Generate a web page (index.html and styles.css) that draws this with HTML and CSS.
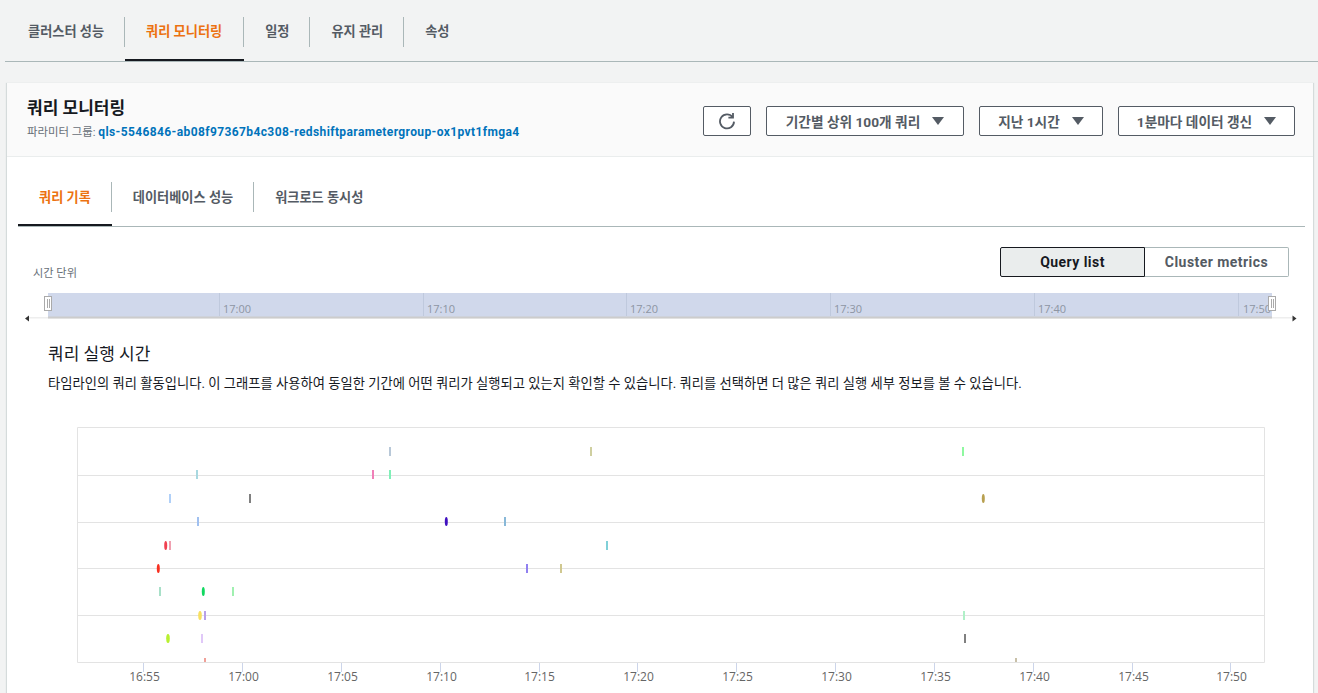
FILE: index.html
```html
<!DOCTYPE html>
<html lang="ko">

<head>
    <meta charset="UTF-8">
    <meta name="viewport" content="width=device-width, initial-scale=1.0">
    <title>쿼리 모니터링</title>
    <link rel="stylesheet" href="styles.css">
</head>

<body>
    <ul class="tabs top-tabs">
        <li class="tab"><a href="#">클러스터 성능</a></li>
        <li class="tab active"><a href="#">쿼리 모니터링</a></li>
        <li class="tab"><a href="#">일정</a></li>
        <li class="tab"><a href="#">유지 관리</a></li>
        <li class="tab last"><a href="#">속성</a></li>
    </ul>

    <div class="panel">
        <div class="panel-head">
            <div class="head-title">
                <h1>쿼리 모니터링</h1>
                <p class="param">파라미터 그룹: <a href="#">qls-5546846-ab08f97367b4c308-redshiftparametergroup-ox1pvt1fmga4</a></p>
            </div>
            <div class="head-actions">
                <button class="btn btn-icon" type="button">
                    <svg width="18" height="18" viewBox="0 0 18 18" fill="none" stroke="#545b64" stroke-width="1.8">
                        <path d="M14.6 5.2A7 7 0 1 0 16 9.6"/>
                        <path d="M10.4 5.6h4.6V1"/>
                    </svg>
                </button>
                <button class="btn btn-top" type="button">기간별 상위 100개 쿼리<span class="caret"></span></button>
                <button class="btn btn-range" type="button">지난 1시간<span class="caret"></span></button>
                <button class="btn btn-refresh" type="button">1분마다 데이터 갱신<span class="caret"></span></button>
            </div>
        </div>

        <div class="panel-body">
            <ul class="tabs sub-tabs">
                <li class="tab active"><a href="#">쿼리 기록</a></li>
                <li class="tab"><a href="#">데이터베이스 성능</a></li>
                <li class="tab last"><a href="#">워크로드 동시성</a></li>
            </ul>

            <div class="toolbar">
                <span class="unit-label">시간 단위</span>
                <div class="segments">
                    <button class="segment selected" type="button">Query list</button>
                    <button class="segment" type="button">Cluster metrics</button>
                </div>
            </div>

            <!-- brush, drawn in page coordinates -->
            <svg class="brush" width="1287" height="35" viewBox="18 288 1287 35">
                <rect x="29" y="317" width="1263" height="1.5" fill="#eeeeee"/>
                <rect x="48" y="293" width="1224" height="24" fill="#d0d8eb"/>
                <rect x="48" y="316.5" width="1224" height="2" fill="#cccccc"/>
                <g stroke="#bfc9dd">
                    <path d="M219.5 293v23M423.5 293v23M626.5 293v23M830.5 293v23M1034.5 293v23M1238.5 293v23"/>
                </g>
                <g class="brush-label">
                    <text x="223" y="313">17:00</text>
                    <text x="427" y="313">17:10</text>
                    <text x="630" y="313">17:20</text>
                    <text x="834" y="313">17:30</text>
                    <text x="1038" y="313">17:40</text>
                    <text x="1243" y="313">17:50</text>
                </g>
                <path d="M25 318.5l4-3v6z" fill="#333"/>
                <path d="M1296.500 318.500l-4-3v6z" fill="#333"/>
                <g fill="#fff" stroke="#aaaaaa">
                    <rect x="44.500" y="296.500" width="7" height="14"/>
                    <rect x="1268.500" y="296.500" width="7" height="14"/>
                </g>
                <path d="M47.500 299v9M49.500 299v9M1271.500 299v9M1273.500 299v9" stroke="#aaaaaa"/>
            </svg>

            <div class="runtime">
                <h2>쿼리 실행 시간</h2>
                <p>타임라인의 쿼리 활동입니다. 이 그래프를 사용하여 동일한 기간에 어떤 쿼리가 실행되고 있는지 확인할 수 있습니다. 쿼리를 선택하면 더 많은 쿼리 실행 세부 정보를 볼 수 있습니다.</p>
            </div>

            <svg class="timeline" width="1287" height="273" viewBox="18 420 1287 273">
                <g stroke="#e3e3e3" fill="none">
                    <path d="M77.500 427.500H1264.500V662.500H77.500z"/>
                    <path d="M77.500 475.500H1264.500M77.500 522.500H1264.500M77.500 568.500H1264.500M77.500 615.500H1264.500"/>
                </g>
                <g stroke="#ccd5ea">
                    <path d="M143.500 663v9M242.500 663v9M341.500 663v9M440.500 663v9M539.500 663v9M637.500 663v9M736.500 663v9M835.500 663v9M934.500 663v9M1033.500 663v9M1132.500 663v9M1230.500 663v9"/>
                </g>
                <g class="axis-label">
                    <text x="144.500" y="681">16:55</text>
                    <text x="243.500" y="681">17:00</text>
                    <text x="342.500" y="681">17:05</text>
                    <text x="441.500" y="681">17:10</text>
                    <text x="539.500" y="681">17:15</text>
                    <text x="638.500" y="681">17:20</text>
                    <text x="737.500" y="681">17:25</text>
                    <text x="836.500" y="681">17:30</text>
                    <text x="935.500" y="681">17:35</text>
                    <text x="1034.500" y="681">17:40</text>
                    <text x="1133.500" y="681">17:45</text>
                    <text x="1231.500" y="681">17:50</text>
                </g>

                <rect x="389" y="447" width="2" height="9" fill="#b8c8d8"/>
                <rect x="590" y="447" width="2" height="9" fill="#cfcfa0"/>
                <rect x="962" y="447" width="2" height="9" fill="#8ff8a0"/>

                <rect x="196" y="470" width="2" height="9" fill="#a8d8e0"/>
                <rect x="372" y="470" width="2" height="9" fill="#f080b8"/>
                <rect x="389" y="470" width="2" height="9" fill="#80f0b8"/>

                <rect x="169" y="494" width="2" height="9" fill="#b0d0f8"/>
                <rect x="249" y="494" width="2" height="9" fill="#808080"/>
                <ellipse cx="983.300" cy="498.500" rx="1.500" ry="4.500" fill="#b8a050"/>

                <rect x="197" y="517" width="2" height="9" fill="#a0c0f0"/>
                <ellipse cx="446.300" cy="521.500" rx="1.500" ry="4.500" fill="#4010c0"/>
                <rect x="504" y="517" width="2" height="9" fill="#88b8d8"/>

                <ellipse cx="165.700" cy="545.500" rx="1.500" ry="4.500" fill="#f04050"/>
                <rect x="169" y="541" width="2" height="9" fill="#f0a0b0"/>
                <rect x="606" y="541" width="2" height="9" fill="#80d0d8"/>

                <ellipse cx="158.300" cy="568.500" rx="1.500" ry="4.500" fill="#f83020"/>
                <rect x="526" y="564" width="2" height="9" fill="#9080f0"/>
                <rect x="560" y="564" width="2" height="9" fill="#d0c890"/>

                <rect x="159" y="587" width="2" height="9" fill="#a8e0c8"/>
                <ellipse cx="203.300" cy="591.500" rx="1.500" ry="4.500" fill="#10d860"/>
                <rect x="232" y="587" width="2" height="9" fill="#a0f0b0"/>

                <ellipse cx="200" cy="615.500" rx="1.800" ry="4.500" fill="#f8e060"/>
                <rect x="204" y="611" width="2" height="9" fill="#b8a0e8"/>
                <rect x="963" y="611" width="2" height="9" fill="#b0f0c8"/>

                <ellipse cx="168" cy="638.500" rx="1.800" ry="4.500" fill="#b8f030"/>
                <rect x="201" y="634" width="2" height="9" fill="#e0c8f8"/>
                <rect x="964" y="634" width="2" height="9" fill="#808080"/>

                <rect x="204" y="658" width="2" height="4" fill="#f0a098"/>
                <rect x="1015" y="658" width="2" height="4" fill="#c8c0a8"/>
            </svg>
        </div>
    </div>
</body>

</html>
```

FILE: styles.css
```css
html,
body {
    height: 100%;
    overflow: hidden;
}

body {
    margin: 0;
    background-color: #f2f3f3;
    color: #16191f;
    font-family: Roboto, "Noto Sans CJK KR", sans-serif;
}

a {
    text-decoration: none;
}

.tabs {
    display: flex;
    list-style: none;
    margin: 0;
    padding: 0;
    border-bottom: 1px solid #aab7b8;
}

.top-tabs {
    margin-left: 5px;
}

.sub-tabs {
    margin-right: 8px;
}

.tab {
    padding: 17px 0 12px;
    border-bottom: 2px solid transparent;
}

.sub-tabs .tab {
    padding-top: 25px;
}

.tab a {
    display: block;
    height: 30px;
    line-height: 29px;
    padding: 0 20px 0 21px;
    border-right: 1px solid #aab7b8;
    color: #545b64;
    font-size: 13.2px;
    font-weight: 700;
}

.sub-tabs .tab a {
    line-height: 31px;
}

.top-tabs .tab:first-child a {
    padding-left: 23px;
}

.tab.last a {
    border-right: none;
}

.tab.active {
    border-bottom-color: #16191f;
}

.tab.active a {
    color: #ec7211;
}

.top-tabs .tab.active a {
    padding-right: 21px;
}

.panel {
    margin: 21px 4px 0 6px;
    height: 640px;
    background-color: #fff;
    border-left: 1px solid #d5dbdb;
    border-right: 1px solid #d5dbdb;
    box-shadow: 0 0 1px #d5dbdb;
}

.panel-head {
    display: flex;
    justify-content: space-between;
    height: 73px;
    padding: 0 18px 0 20px;
    background-color: #fafafa;
    border-bottom: 1px solid #eaeded;
}

.head-title h1 {
    margin: 13px 0 0;
    font-size: 17px;
    font-weight: 700;
    line-height: 24px;
}

.param {
    margin: 4px 0 0;
    color: #687078;
    font-size: 11.4px;
    line-height: 16px;
}

.param a {
    color: #0073bb;
    font-size: 12px;
    font-weight: 700;
    letter-spacing: 0.39px;
}

.head-actions {
    display: flex;
    gap: 15px;
    padding-top: 23px;
}

.btn {
    display: flex;
    align-items: center;
    justify-content: center;
    height: 30px;
    padding: 0;
    background-color: #fff;
    border: 1px solid #545b64;
    border-radius: 2px;
    color: #545b64;
    font-family: inherit;
    font-size: 13.7px;
    font-weight: 700;
}

.btn-icon {
    width: 48px;
}

.btn-top {
    width: 198px;
}

.btn-range {
    width: 124px;
}

.btn-refresh {
    width: 177px;
}

.caret {
    width: 0;
    height: 0;
    margin-left: 12px;
    border-left: 6px solid transparent;
    border-right: 6px solid transparent;
    border-top: 8px solid #545b64;
}

.panel-body {
    padding-left: 11px;
}

.toolbar {
    display: flex;
    justify-content: space-between;
    align-items: flex-end;
    margin-top: 20px;
    padding: 0 24px 0 15px;
}

.unit-label {
    color: #687078;
    font-size: 11.2px;
    line-height: 16px;
    margin-bottom: -5px;
}

.segments {
    display: flex;
}

.segment {
    width: 144px;
    height: 30px;
    padding: 0;
    background-color: #fff;
    border: 1px solid #aab7b8;
    border-left: none;
    border-radius: 0 2px 2px 0;
    color: #545b64;
    font-family: inherit;
    font-size: 14px;
    font-weight: 700;
    letter-spacing: 0.45px;
}

.segment.selected {
    width: 145px;
    background-color: #eaeded;
    border: 1px solid #16191f;
    border-radius: 2px 0 0 2px;
    color: #16191f;
}

.brush {
    display: block;
    margin-top: 11px;
}

.brush-label text {
    fill: #8d95a3;
    font-family: "Open Sans", sans-serif;
    font-size: 11px;
}

.runtime {
    padding-left: 30px;
}

.runtime h2 {
    margin: 18px 0 0;
    font-size: 17px;
    font-weight: 400;
    line-height: 26px;
}

.runtime p {
    margin: 8px 0 0;
    font-size: 13.3px;
    line-height: 18px;
}

.timeline {
    display: block;
    margin-top: 27px;
}

.axis-label text {
    fill: #666;
    font-family: "Open Sans", sans-serif;
    font-size: 12px;
    text-anchor: middle;
}
```
